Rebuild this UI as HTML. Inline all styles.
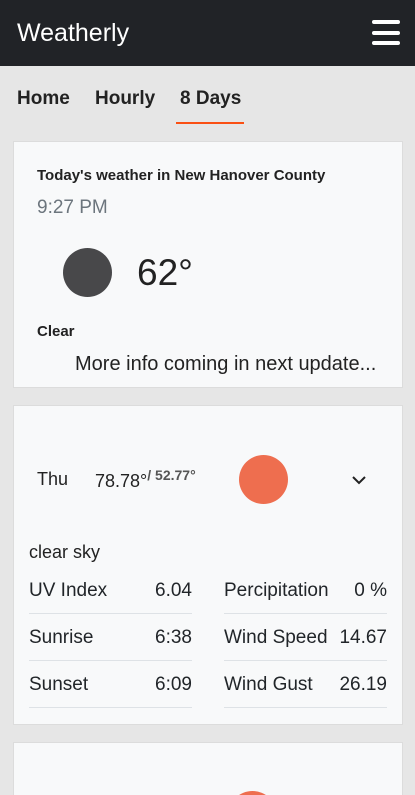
<!DOCTYPE html>
<html><head><style>
*{margin:0;padding:0;box-sizing:border-box}
html,body{width:415px;height:795px;overflow:hidden}
body{background:#e6e6e6;font-family:"Liberation Sans","DejaVu Sans",sans-serif;color:#212529;position:relative}
.a{position:absolute;white-space:nowrap}
.hdr{position:absolute;left:0;top:0;width:415px;height:66px;background:#212327}
.bar{position:absolute;left:372px;width:28px;height:4px;background:#fff;border-radius:2px}
.card{position:absolute;left:13px;width:390px;background:#f8f9fa;border:1px solid #dcdcdc;overflow:hidden}
.line{position:absolute;height:1px;background:#dee2e6}
.r{text-align:right;width:80px}
.t{font-size:19px}
</style></head><body>
<div class="hdr"></div>
<div class="a" style="left:17px;top:19px;font-size:25px;color:#fff">Weatherly</div>
<div class="bar" style="top:20px"></div><div class="bar" style="top:31px"></div><div class="bar" style="top:41px"></div>
<div class="a" style="left:17px;top:88px;font-size:19px;font-weight:bold;color:#222">Home</div>
<div class="a" style="left:95px;top:88px;font-size:19px;font-weight:bold;color:#222">Hourly</div>
<div class="a" style="left:180px;top:88px;font-size:19px;font-weight:bold;color:#222">8 Days</div>
<div class="a" style="left:176px;top:122px;width:68px;height:2px;background:#fa5014"></div>

<div class="card" style="top:141px;height:247px"></div>
<div class="a" style="left:37px;top:167px;font-size:15px;font-weight:bold;color:#222">Today's weather in New Hanover County</div>
<div class="a" style="left:37px;top:197px;font-size:19px;color:#6c757d">9:27 PM</div>
<div class="a" style="left:63px;top:248px;width:49px;height:49px;border-radius:50%;background:#48484a"></div>
<div class="a" style="left:137px;top:252px;font-size:37px;font-weight:300;color:#222">62°</div>
<div class="a" style="left:37px;top:323px;font-size:15px;font-weight:bold;color:#222">Clear</div>
<div class="a" style="left:75px;top:353px;font-size:20px;color:#222">More info coming in next update...</div>

<div class="card" style="top:405px;height:320px"></div>
<div class="a" style="left:37px;top:469px;font-size:18px;color:#222">Thu</div>
<div class="a" style="left:95px;top:471px;font-size:18px;color:#222">78.78°<span style="font-size:14px;font-weight:bold;color:#555;position:relative;top:-7px">/ 52.77°</span></div>
<div class="a" style="left:239px;top:455px;width:49px;height:49px;border-radius:50%;background:#ee6e4f"></div>
<svg class="a" style="left:351px;top:474px" width="16" height="12" viewBox="0 0 16 12"><path d="M2 3 L8 9 L14 3" fill="none" stroke="#222" stroke-width="2"/></svg>
<div class="a" style="left:29px;top:542px;font-size:18px;color:#222">clear sky</div>

<div class="a t" style="left:29px;top:580px">UV Index</div><div class="a t r" style="left:112px;top:580px">6.04</div>
<div class="a t" style="left:29px;top:627px">Sunrise</div><div class="a t r" style="left:112px;top:627px">6:38</div>
<div class="a t" style="left:29px;top:674px">Sunset</div><div class="a t r" style="left:112px;top:674px">6:09</div>
<div class="a t" style="left:224px;top:580px">Percipitation</div><div class="a t r" style="left:307px;top:580px">0 %</div>
<div class="a t" style="left:224px;top:627px">Wind Speed</div><div class="a t r" style="left:307px;top:627px">14.67</div>
<div class="a t" style="left:224px;top:674px">Wind Gust</div><div class="a t r" style="left:307px;top:674px">26.19</div>
<div class="line" style="left:29px;width:163px;top:613px"></div><div class="line" style="left:29px;width:163px;top:660px"></div><div class="line" style="left:29px;width:163px;top:707px"></div>
<div class="line" style="left:224px;width:163px;top:613px"></div><div class="line" style="left:224px;width:163px;top:660px"></div><div class="line" style="left:224px;width:163px;top:707px"></div>

<div class="card" style="top:742px;height:53px;border-bottom:none"></div>
<svg class="a" style="left:228px;top:791px" width="49" height="4" viewBox="0 0 49 4"><circle cx="24.5" cy="24.5" r="24.5" fill="#ee6e4f"/></svg>
</body></html>
